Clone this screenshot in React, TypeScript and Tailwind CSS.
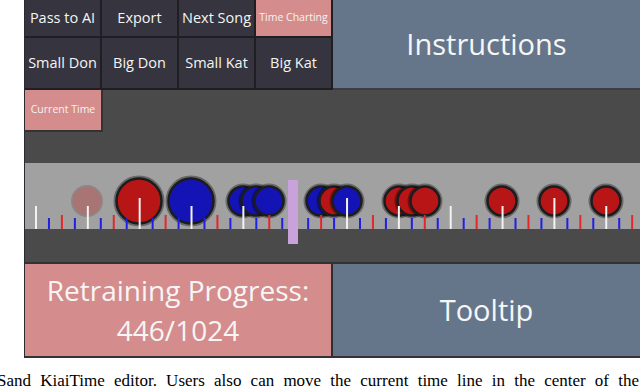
import React from "react";

const font = { fontFamily: '"Open Sans", "Noto Sans", sans-serif' };

type Note = { x: number; r: number; color: "red" | "blue" | "faded" };

const notes: Note[] = [
  { x: 87, r: 15, color: "faded" },
  { x: 139, r: 23, color: "red" },
  { x: 191, r: 23, color: "blue" },
  { x: 243, r: 15, color: "blue" },
  { x: 256, r: 15, color: "blue" },
  { x: 269, r: 15, color: "blue" },
  { x: 321, r: 15, color: "blue" },
  { x: 334, r: 15, color: "red" },
  { x: 347, r: 15, color: "blue" },
  { x: 399, r: 15, color: "red" },
  { x: 412, r: 15, color: "red" },
  { x: 425, r: 15, color: "red" },
  { x: 502, r: 15, color: "red" },
  { x: 554, r: 15, color: "red" },
  { x: 606, r: 15, color: "red" },
];

function Timeline() {
  const ticks = [];
  for (let i = 0; i < 48; i++) {
    const x = 36 + i * 12.96 - 25;
    const kind = i % 4;
    const beat = Math.floor(i / 4);
    let y1 = 55;
    let color = "#2020e0";
    if (kind === 0) {
      color = "#f2f2f2";
      y1 = beat % 4 === 2 ? 35 : 43;
    } else if (kind === 2) {
      color = "#e2282a";
      y1 = 52;
    }
    ticks.push(<line key={i} x1={x} x2={x} y1={y1} y2={66} stroke={color} strokeWidth={2} />);
  }

  return (
    <svg width="615" height="66" className="block">
      {notes.map((n, i) => {
        const cx = n.x - 25;
        if (n.color === "faded") {
          return (
            <circle key={i} cx={cx} cy={38} r={n.r} fill="#a87474" stroke="#8f8585" strokeWidth={2} />
          );
        }
        const fill = n.color === "red" ? "#b81616" : "#1414b6";
        return (
          <g key={i}>
            <circle cx={cx} cy={38} r={n.r} fill="none" stroke="rgba(0,0,0,0.35)" strokeWidth={5} />
            <circle cx={cx} cy={38} r={n.r - 0.5} fill={fill} stroke="#1c1c1e" strokeWidth={2.5} />
          </g>
        );
      })}
      {ticks}
    </svg>
  );
}

function Btn({ label, small, pink }: { label: string; small?: boolean; pink?: boolean }) {
  return (
    <div
      className={`flex items-center justify-center border-r-2 border-b-2 border-[#1e1e23] text-[#f4f4f4] whitespace-nowrap ${
        pink ? "bg-[#d48c8c]" : "bg-[#36353f]"
      } ${small ? "text-[10.5px]" : "text-[14.5px]"}`}
    >
      {label}
    </div>
  );
}

export default function App() {
  return (
    <div className="w-[640px] h-[386px] bg-white overflow-hidden relative" style={font}>
      <div className="ml-[24px] w-[616px] border-l border-[#2a2a30]">
        {/* top buttons + instructions */}
        <div className="flex h-[90px]">
          <div className="w-[308px] grid grid-cols-4 grid-rows-[38px_52px]">
            <Btn label="Pass to AI" />
            <Btn label="Export" />
            <Btn label="Next Song" />
            <Btn label="Time Charting" small pink />
            <Btn label="Small Don" />
            <Btn label="Big Don" />
            <Btn label="Small Kat" />
            <Btn label="Big Kat" />
          </div>
          <div className="flex-1 flex items-center justify-center bg-[#66768a] border-b-2 border-[#3a3d44] text-[#f6f6f6] text-[29px]">
            Instructions
          </div>
        </div>

        {/* current time row */}
        <div className="h-[73px] bg-[#4a4a4a]">
          <div className="w-[78px] h-[42px] flex items-center justify-center bg-[#d48c8c] border-r-2 border-b-2 border-[#333336] text-[10.5px] text-[#f4f4f4]">
            Current Time
          </div>
        </div>

        {/* timeline */}
        <div className="relative">
          <div className="h-[66px] bg-[#a1a1a1]">
            <Timeline />
          </div>
          <div className="h-[35px] bg-[#4a4a4a] border-b-2 border-[#333336]" />
          <div className="absolute left-[263px] top-[17px] w-[10px] h-[64px] bg-[#c9a2dc]" />
        </div>

        {/* bottom panels */}
        <div className="flex h-[94px] border-b-2 border-[#333336]">
          <div className="w-[308px] flex flex-col items-center justify-center bg-[#d48c8c] border-r-2 border-[#2e2e33] text-[#f6f6f6] text-[28px] leading-[40px]">
            <div>Retraining Progress:</div>
            <div>446/1024</div>
          </div>
          <div className="flex-1 flex items-center justify-center bg-[#66768a] text-[#f6f6f6] text-[29px]">
            Tooltip
          </div>
        </div>
      </div>

      <p
        className="absolute left-[-3px] top-[370px] w-[642px] text-[17px] leading-[22px] text-black text-justify [text-align-last:justify]"
        style={{ fontFamily: '"Liberation Serif", serif' }}
      >
        Sand KiaiTime editor. Users also can move the current time line in the center of the
      </p>
    </div>
  );
}
